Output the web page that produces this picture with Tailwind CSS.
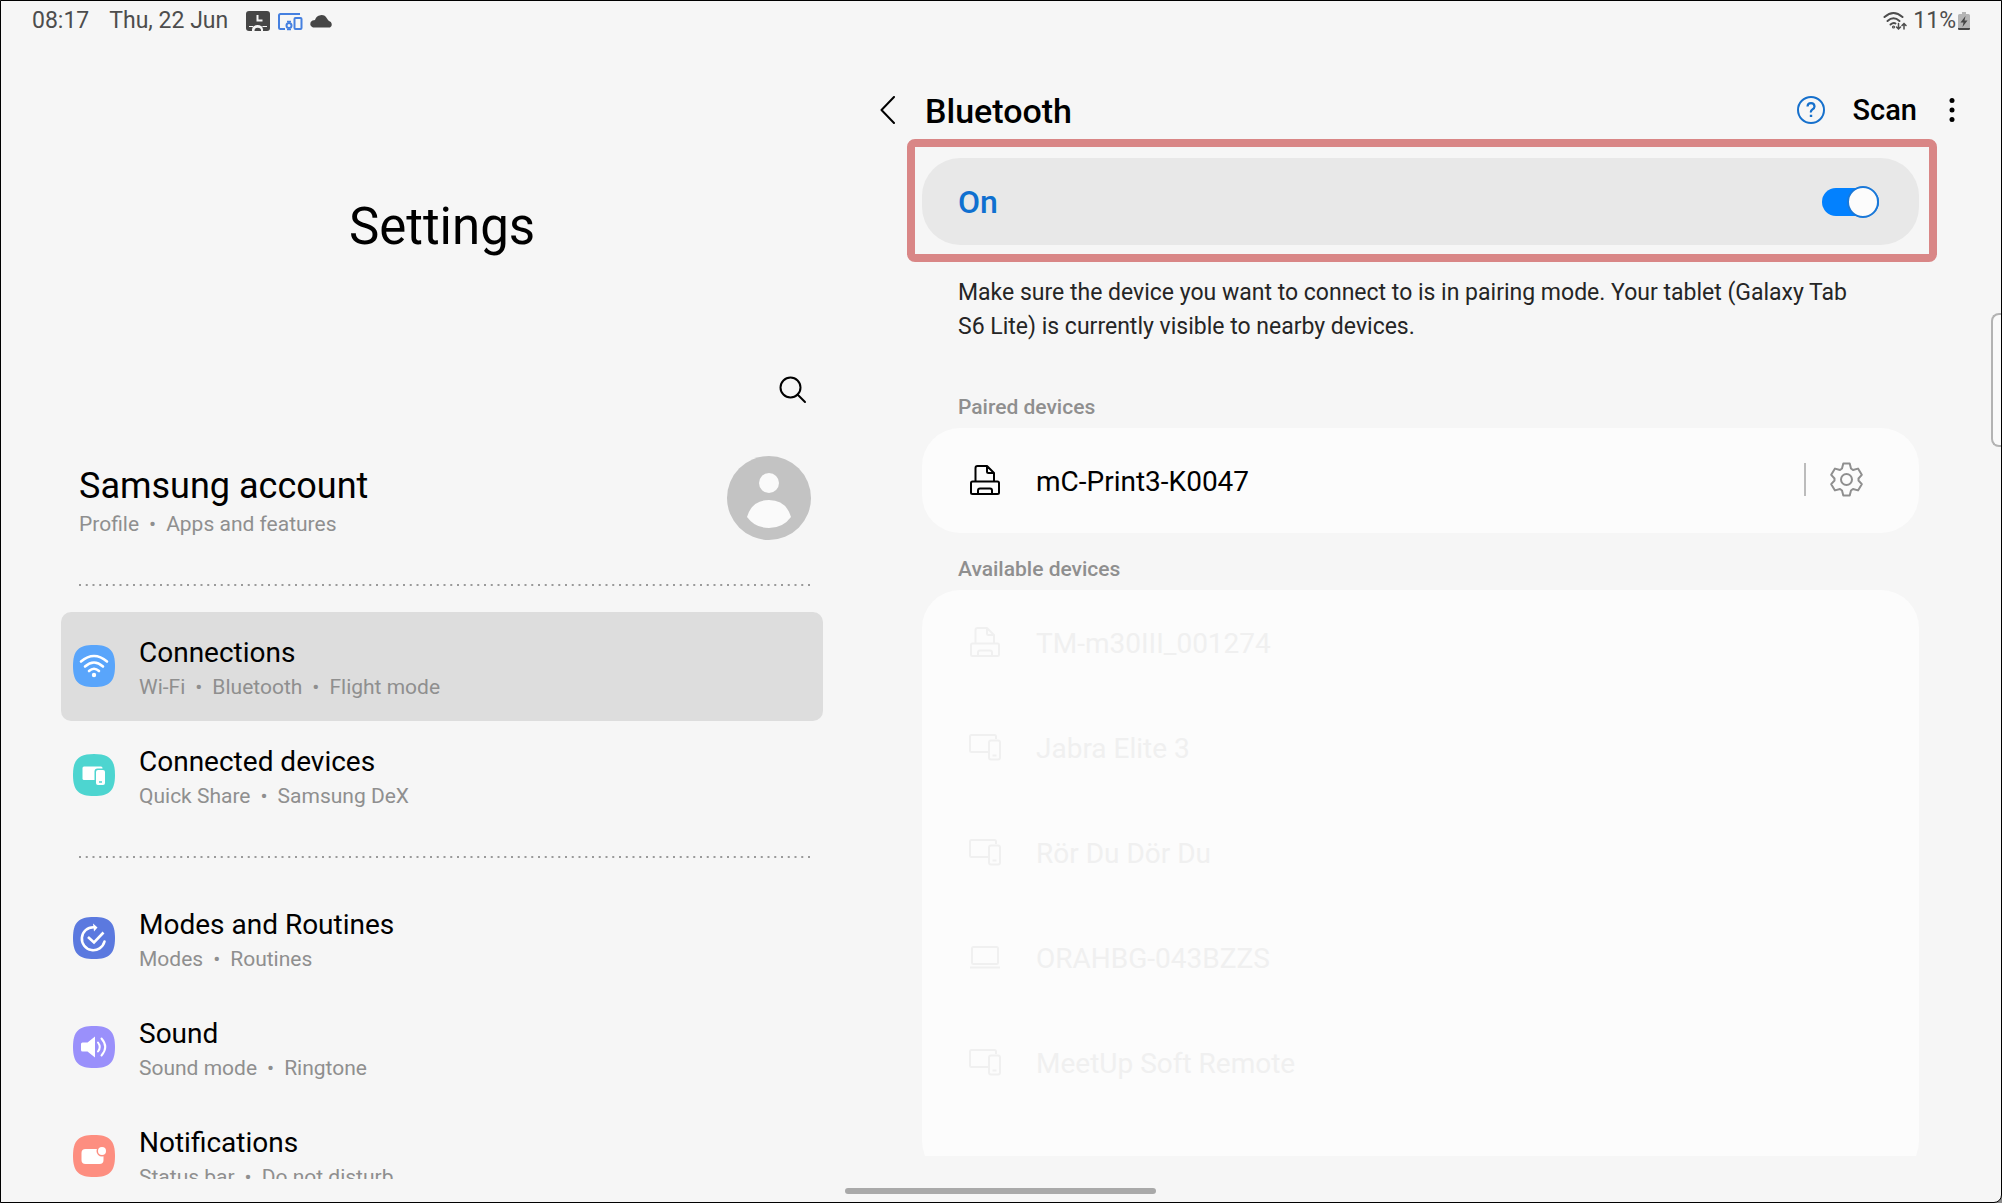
<!DOCTYPE html>
<html lang="en">
<head>
    <meta charset="UTF-8">
    <meta name="viewport" content="width=device-width, initial-scale=1.0">
    <title>Settings - Bluetooth</title>
    <script src="https://cdn.jsdelivr.net/npm/@tailwindcss/browser@4"></script>
</head>
<body class="bg-[#8a8a8a] font-['Roboto',sans-serif] text-black">
    <div class="relative h-screen flex flex-col overflow-hidden border border-black bg-[#f6f6f6] rounded-br-lg">

        <!-- Status bar -->
        <header class="h-10 shrink-0 flex items-center justify-between pl-[31px] pr-[31px] text-[23px] text-[#4d4d4d]">
            <div class="flex items-center">
                <span>08:17</span>
                <span class="ml-5">Thu, 22 Jun</span>
                <svg class="ml-[18px] w-6 h-5" viewBox="0 0 24 20">
                    <rect width="24" height="20" rx="3" fill="#464646"/>
                    <path d="M11.500 4v5.500h5" fill="none" stroke="#f6f6f6" stroke-width="2"/>
                    <path d="M6 20v-1.500a5.500 4.500 0 0 1 11 0V20z" fill="#f6f6f6"/>
                    <path d="M8.500 20v-.5a3 2.500 0 0 1 6.500 0v.5z" fill="#464646"/>
                    <path d="M3 15.500h4M16.500 15.500H21" stroke="#f6f6f6" stroke-width="1"/>
                </svg>
                <svg class="ml-[7px] w-[26px] h-5" viewBox="0 0 26 20" fill="none" stroke="#4580e0" stroke-width="2">
                    <path d="M23 3H3.500Q2 3 2 4.500V16.500Q2 18 3.500 18H8"/>
                    <rect x="17.500" y="7" width="7" height="11" rx="1"/>
                    <circle cx="12" cy="14.500" r="2.500"/>
                    <path d="M10 18.500h4M10 10.500h4" stroke-width="1.500"/>
                </svg>
                <svg class="ml-1.5 w-[25px] h-5" viewBox="0 0 25 20" fill="#464646">
                    <path d="M4 16.500A3.700 3.700 0 0 1 3.500 9.500Q5 9 6 9A6.500 6.500 0 0 1 18 7.500Q19 9 20 10A3.500 3.500 0 0 1 21 16.500z"/>
                </svg>
            </div>
            <div class="flex items-center">
                <svg class="w-6 h-5" viewBox="0 0 24 20" fill="none" stroke="#4d4d4d" stroke-width="2" stroke-linecap="round">
                    <path d="M1.500 6Q10.500-2 19.500 6"/>
                    <path d="M4.500 10Q10.500 4.500 16.500 10"/>
                    <path d="M7.500 13.500Q10.500 11 12.500 12.500"/>
                    <circle cx="10.500" cy="16" r=".6"/>
                    <path d="M15.500 12.500v5M13.500 16l2 2 2-2M21 18v-5M19 14.500l2-2 2 2" stroke-width="1.500"/>
                </svg>
                <span class="ml-1.5">11%</span>
                <svg class="ml-0.5 w-3 h-[18px]" viewBox="0 0 12 18">
                    <path d="M4 0h4v2h2.500Q12 2 12 3.500V16.500Q12 18 10.500 18H1.500Q0 18 0 16.500V3.500Q0 2 1.500 2H4z" fill="#b5b5b5"/>
                    <path d="M0 16h12v.5Q12 18 10.500 18H1.500Q0 18 0 16.500zM7.500 4L2.500 10.500H5.500L4.500 15L9.500 8.500H6.500z" fill="#464646"/>
                </svg>
            </div>
        </header>

        <main class="flex-1 min-h-0 grid grid-cols-[882fr_1118fr]">
            <!-- Settings list -->
            <section class="h-full overflow-hidden px-[60px]">
                <h1 class="pt-[156px] text-center text-[51px] leading-[60px]">Settings</h1>

                <div class="mt-[119px] mr-4 flex justify-end">
                    <button aria-label="Search" class="w-7 h-7">
                        <svg class="w-7 h-7" viewBox="0 0 28 28" fill="none" stroke="#000" stroke-width="2" stroke-linecap="round">
                            <circle cx="11.500" cy="11.500" r="10"/>
                            <path d="M18.500 18.500L26 26"/>
                        </svg>
                    </button>
                </div>

                <a href="#account" class="mt-[52px] ml-[18px] mr-3 flex items-end justify-between">
                    <span class="block">
                        <span class="block text-[36px] leading-[44px]">Samsung account</span>
                        <span class="block text-[21px] leading-8 text-[#8f8f8f]">Profile<span class="mx-2.5">•</span>Apps and features</span>
                    </span>
                    <svg class="w-[84px] h-[84px]" viewBox="0 0 84 84">
                        <circle cx="42" cy="42" r="42" fill="#c3c3c3"/>
                        <circle cx="42" cy="27" r="10" fill="#fafafa"/>
                        <path d="M20 61Q25 44 42 44T64 61Q56 72 42 72T20 61z" fill="#fafafa"/>
                    </svg>
                </a>

                <svg class="block mt-[18px] w-full h-[54px] pl-[18px] pr-3 overflow-hidden"><line x1="0" y1="27" x2="100%" y2="27" stroke="#9a9a9a" stroke-width="2" stroke-dasharray="2 4.75"/></svg>

                <nav>
                    <a href="#connections" class="h-[109px] flex items-center gap-6 rounded-[10px] bg-[#dddddd] px-3 pb-px">
                        <svg class="w-[42px] h-[42px]" viewBox="0 0 42 42">
                            <path d="M21 0C36.500 0 42 5.500 42 21S36.500 42 21 42 0 36.500 0 21 5.500 0 21 0z" fill="#59a5fb"/>
                            <g fill="none" stroke="#fff" stroke-width="2.600" stroke-linecap="round">
                                <path d="M8 16.500Q21 5.500 34 16.500"/>
                                <path d="M12 21.500Q21 13.500 30 21.500"/>
                                <path d="M16 26Q21 21.500 26 26"/>
                            </g>
                            <circle cx="21" cy="30" r="2.200" fill="#fff"/>
                        </svg>
                        <span class="block">
                            <span class="block text-[28px] leading-[42px]">Connections</span>
                            <span class="block text-[21px] leading-[26px] text-[#8f8f8f]">Wi-Fi<span class="mx-2.5">•</span>Bluetooth<span class="mx-2.5">•</span>Flight mode</span>
                        </span>
                    </a>
                    <a href="#devices" class="h-[109px] flex items-center gap-6 px-3 pb-px">
                        <svg class="w-[42px] h-[42px]" viewBox="0 0 42 42">
                            <path d="M21 0C36.500 0 42 5.500 42 21S36.500 42 21 42 0 36.500 0 21 5.500 0 21 0z" fill="#4dd5d0"/>
                            <rect x="9.500" y="12.500" width="20" height="13.500" rx="1.500" fill="#fff"/>
                            <rect x="21.500" y="14.500" width="12" height="18" rx="3" fill="#4dd5d0"/>
                            <rect x="23" y="16" width="9" height="15" rx="2" fill="#fff"/>
                            <path d="M26 28h3" stroke="#4dd5d0" stroke-width="1.500"/>
                        </svg>
                        <span class="block">
                            <span class="block text-[28px] leading-[42px]">Connected devices</span>
                            <span class="block text-[21px] leading-[26px] text-[#8f8f8f]">Quick Share<span class="mx-2.5">•</span>Samsung DeX</span>
                        </span>
                    </a>

                    <svg class="block w-full h-[54px] pl-[18px] pr-3 overflow-hidden"><line x1="0" y1="27" x2="100%" y2="27" stroke="#9a9a9a" stroke-width="2" stroke-dasharray="2 4.75"/></svg>

                    <a href="#modes" class="h-[109px] flex items-center gap-6 px-3 pb-px">
                        <svg class="w-[42px] h-[42px]" viewBox="0 0 42 42">
                            <path d="M21 0C36.500 0 42 5.500 42 21S36.500 42 21 42 0 36.500 0 21 5.500 0 21 0z" fill="#5b79df"/>
                            <g fill="none" stroke="#fff" stroke-width="2.600">
                                <path d="M20.500 10.200A11.500 11.500 0 1 0 31.500 24.500" stroke-linecap="round"/>
                                <path d="M15 20l6 5.500L30.500 15.500"/>
                            </g>
                            <path d="M20 6.500l4.500 4-3.500 4z" fill="#fff"/>
                        </svg>
                        <span class="block">
                            <span class="block text-[28px] leading-[42px]">Modes and Routines</span>
                            <span class="block text-[21px] leading-[26px] text-[#8f8f8f]">Modes<span class="mx-2.5">•</span>Routines</span>
                        </span>
                    </a>
                    <a href="#sound" class="h-[109px] flex items-center gap-6 px-3 pb-px">
                        <svg class="w-[42px] h-[42px]" viewBox="0 0 42 42">
                            <path d="M21 0C36.500 0 42 5.500 42 21S36.500 42 21 42 0 36.500 0 21 5.500 0 21 0z" fill="#9a90fb"/>
                            <path d="M9.500 16.500h5L22 10.500V31.500L14.500 25.500H9.500Q8 25.500 8 24V18Q8 16.500 9.500 16.500z" fill="#fff"/>
                            <path d="M25 16.500Q28.500 21 25 25.500M28.500 12.500Q36 21 28.500 29.500" fill="none" stroke="#fff" stroke-width="2" stroke-linecap="round"/>
                        </svg>
                        <span class="block">
                            <span class="block text-[28px] leading-[42px]">Sound</span>
                            <span class="block text-[21px] leading-[26px] text-[#8f8f8f]">Sound mode<span class="mx-2.5">•</span>Ringtone</span>
                        </span>
                    </a>
                    <a href="#notifications" class="h-[109px] flex items-center gap-6 px-3 pb-px">
                        <svg class="w-[42px] h-[42px]" viewBox="0 0 42 42">
                            <path d="M21 0C36.500 0 42 5.500 42 21S36.500 42 21 42 0 36.500 0 21 5.500 0 21 0z" fill="#fd8e80"/>
                            <rect x="8.500" y="14" width="22" height="15" rx="4" fill="#fff"/>
                            <circle cx="29" cy="16" r="5.500" fill="#fd8e80"/>
                            <circle cx="29" cy="16" r="4" fill="#fff"/>
                        </svg>
                        <span class="block">
                            <span class="block text-[28px] leading-[42px]">Notifications</span>
                            <span class="block text-[21px] leading-[26px] text-[#8f8f8f]">Status bar<span class="mx-2.5">•</span>Do not disturb</span>
                        </span>
                    </a>
                </nav>
            </section>

            <!-- Bluetooth -->
            <section class="h-full min-h-0 flex flex-col pl-[39px] pr-[82px] pb-[23px]">
                <div class="h-[117px] shrink-0 pt-[21px] -ml-[42px] -mr-[37px] flex items-center">
                    <button aria-label="Back" class="w-4 h-7">
                        <svg class="w-4 h-7" viewBox="0 0 16 28" fill="none" stroke="#000" stroke-width="2" stroke-linecap="round" stroke-linejoin="round"><path d="M14 1L1.500 14 14 27"/></svg>
                    </button>
                    <h2 class="ml-[29px] pt-0.5 text-[34px] font-medium">Bluetooth</h2>
                    <button aria-label="Help" class="ml-auto w-7 h-7">
                        <svg class="w-7 h-7" viewBox="0 0 28 28" fill="none" stroke="#1670cc" stroke-width="2">
                            <circle cx="14" cy="14" r="13"/>
                            <path d="M10.500 10.500Q10.700 7.200 14 7.200T17.500 10.400Q17.500 12 15.500 13.300T14 16.500" stroke-width="2.200"/>
                            <path d="M14 18.700v2.400" stroke-width="2.400"/>
                        </svg>
                    </button>
                    <button class="ml-7 pt-0.5 text-[29px] font-medium">Scan</button>
                    <button aria-label="More options" class="ml-[31px] w-2 h-7">
                        <svg class="w-2 h-7" viewBox="0 0 8 28"><circle cx="4" cy="4.500" r="2.500"/><circle cx="4" cy="14" r="2.500"/><circle cx="4" cy="23.500" r="2.500"/></svg>
                    </button>
                </div>

                <label class="relative h-[87px] shrink-0 flex items-center justify-between rounded-[38px] bg-[#e8e8e8] pl-9 pr-10">
                    <span class="text-[32px] font-medium text-[#0f70d0]">On</span>
                    <span class="relative h-8 w-[57px]">
                        <input type="checkbox" role="switch" checked class="appearance-none block w-full h-7 my-0.5 rounded-full bg-[#b0b0b0] checked:bg-[#0381fe]">
                        <span class="absolute right-0 top-0 size-8 rounded-full border-2 border-[#1a78d8] bg-[#fcfcfc]"></span>
                    </span>
                    <!-- highlight frame -->
                    <span class="pointer-events-none absolute -left-[15px] -right-[18px] -top-[19px] -bottom-[17px] rounded-lg border-8 border-[#d98686]"></span>
                </label>

                <p class="mt-[31px] ml-9 mr-[50px] text-[23px] leading-[34px] text-[#252525]">Make sure the device you want to connect to is in pairing mode. Your tablet (Galaxy Tab S6 Lite) is currently visible to nearby devices.</p>

                <h3 class="mt-[49px] ml-9 text-[21px] leading-7 font-medium text-[#8f8f8f]">Paired devices</h3>
                <div class="mt-[7px] h-[105px] shrink-0 flex items-center rounded-[38px] bg-[#fcfcfc] pl-[47px] pr-[49px] pb-0.5">
                    <svg class="w-8 h-8" viewBox="0 0 32 32" fill="none" stroke="#000" stroke-width="2" stroke-linejoin="round">
                        <path d="M6.500 17V4Q6.500 2 8.500 2H18L25 9V17M18 2V7.500Q18 9 19.500 9H25"/>
                        <rect x="2" y="17.500" width="28" height="12.500" rx="1.500"/>
                        <path d="M9 30V26.500Q9 24.500 11 24.500H21Q23 24.500 23 26.500V30"/>
                    </svg>
                    <span class="ml-[35px] pt-1 text-[28px]">mC-Print3-K0047</span>
                    <span class="ml-auto w-0.5 h-[33px] bg-[#bcbcbc]"></span>
                    <button aria-label="Device settings" class="ml-[23px] mr-1.5 w-[35px] h-[35px]">
                        <svg class="w-[35px] h-[35px]" viewBox="0 0 35 35" fill="none" stroke="#8f8f8f" stroke-width="2" stroke-linejoin="round">
                            <path d="M14.300 1.500H20.700L22 6.500 24 8 29 6.600 32.800 12.800 29.500 16.500V18.500L32.800 22.200 29 28.400 24 27 22 28.500 20.700 33.500H14.300L13 28.500 11 27 6 28.400 2.200 22.200 5.500 18.500V16.500L2.200 12.800 6 6.600 11 8 13 6.500z"/>
                            <circle cx="17.500" cy="17.500" r="5.500"/>
                        </svg>
                    </button>
                </div>

                <h3 class="mt-[22px] ml-9 text-[21px] leading-7 font-medium text-[#8f8f8f]">Available devices</h3>
                <div class="mt-[7px] flex-1 min-h-0 overflow-hidden">
                    <ul class="rounded-[38px] bg-[#fcfcfc] pb-16 text-[28px] text-[#f0f0f0]">
                        <li class="h-[105px] flex items-center gap-[35px] px-[47px] pb-0.5">
                            <svg class="w-8 h-8" viewBox="0 0 32 32" fill="none" stroke="currentColor" stroke-width="2" stroke-linejoin="round">
                                <path d="M6.500 17V4Q6.500 2 8.500 2H18L25 9V17M18 2V7.500Q18 9 19.500 9H25"/>
                                <rect x="2" y="17.500" width="28" height="12.500" rx="1.500"/>
                                <path d="M9 30V26.500Q9 24.500 11 24.500H21Q23 24.500 23 26.500V30"/>
                            </svg>
                            <span class="pt-1">TM-m30III_001274</span>
                        </li>
                        <li class="h-[105px] flex items-center gap-[35px] px-[47px] pb-0.5">
                            <svg class="w-8 h-8" viewBox="0 0 32 32" fill="none" stroke="currentColor" stroke-width="2">
                                <path d="M27 8V5.500Q27 4 25.500 4H2.500Q1 4 1 5.500V19.500Q1 21 2.500 21H19"/>
                                <rect x="20" y="9.500" width="11" height="19" rx="2"/>
                                <path d="M23.500 24.500h4"/>
                            </svg>
                            <span class="pt-1">Jabra Elite 3</span>
                        </li>
                        <li class="h-[105px] flex items-center gap-[35px] px-[47px] pb-0.5">
                            <svg class="w-8 h-8" viewBox="0 0 32 32" fill="none" stroke="currentColor" stroke-width="2">
                                <path d="M27 8V5.500Q27 4 25.500 4H2.500Q1 4 1 5.500V19.500Q1 21 2.500 21H19"/>
                                <rect x="20" y="9.500" width="11" height="19" rx="2"/>
                                <path d="M23.500 24.500h4"/>
                            </svg>
                            <span class="pt-1">Rör Du Dör Du</span>
                        </li>
                        <li class="h-[105px] flex items-center gap-[35px] px-[47px] pb-0.5">
                            <svg class="w-8 h-8" viewBox="0 0 32 32" fill="none" stroke="currentColor" stroke-width="2">
                                <rect x="3" y="6" width="26" height="17" rx="1.500"/>
                                <path d="M1 26.500h30"/>
                            </svg>
                            <span class="pt-1">ORAHBG-043BZZS</span>
                        </li>
                        <li class="h-[105px] flex items-center gap-[35px] px-[47px] pb-0.5">
                            <svg class="w-8 h-8" viewBox="0 0 32 32" fill="none" stroke="currentColor" stroke-width="2">
                                <path d="M27 8V5.500Q27 4 25.500 4H2.500Q1 4 1 5.500V19.500Q1 21 2.500 21H19"/>
                                <rect x="20" y="9.500" width="11" height="19" rx="2"/>
                                <path d="M23.500 24.500h4"/>
                            </svg>
                            <span class="pt-1">MeetUp Soft Remote</span>
                        </li>
                    </ul>
                </div>
            </section>
        </main>

        <!-- Gesture bar -->
        <footer class="h-[23px] shrink-0 flex justify-center pt-[9px] pr-0.5">
            <div class="w-[311px] h-1.5 rounded-full bg-[#a9a9a9]"></div>
        </footer>

        <!-- Edge panel handle -->
        <div class="absolute right-0 top-[312px] w-2.5 h-[134px] rounded-l-lg border-2 border-r-0 border-[#b3b3b3] bg-[#fafafa]"></div>
    </div>
</body>
</html>
